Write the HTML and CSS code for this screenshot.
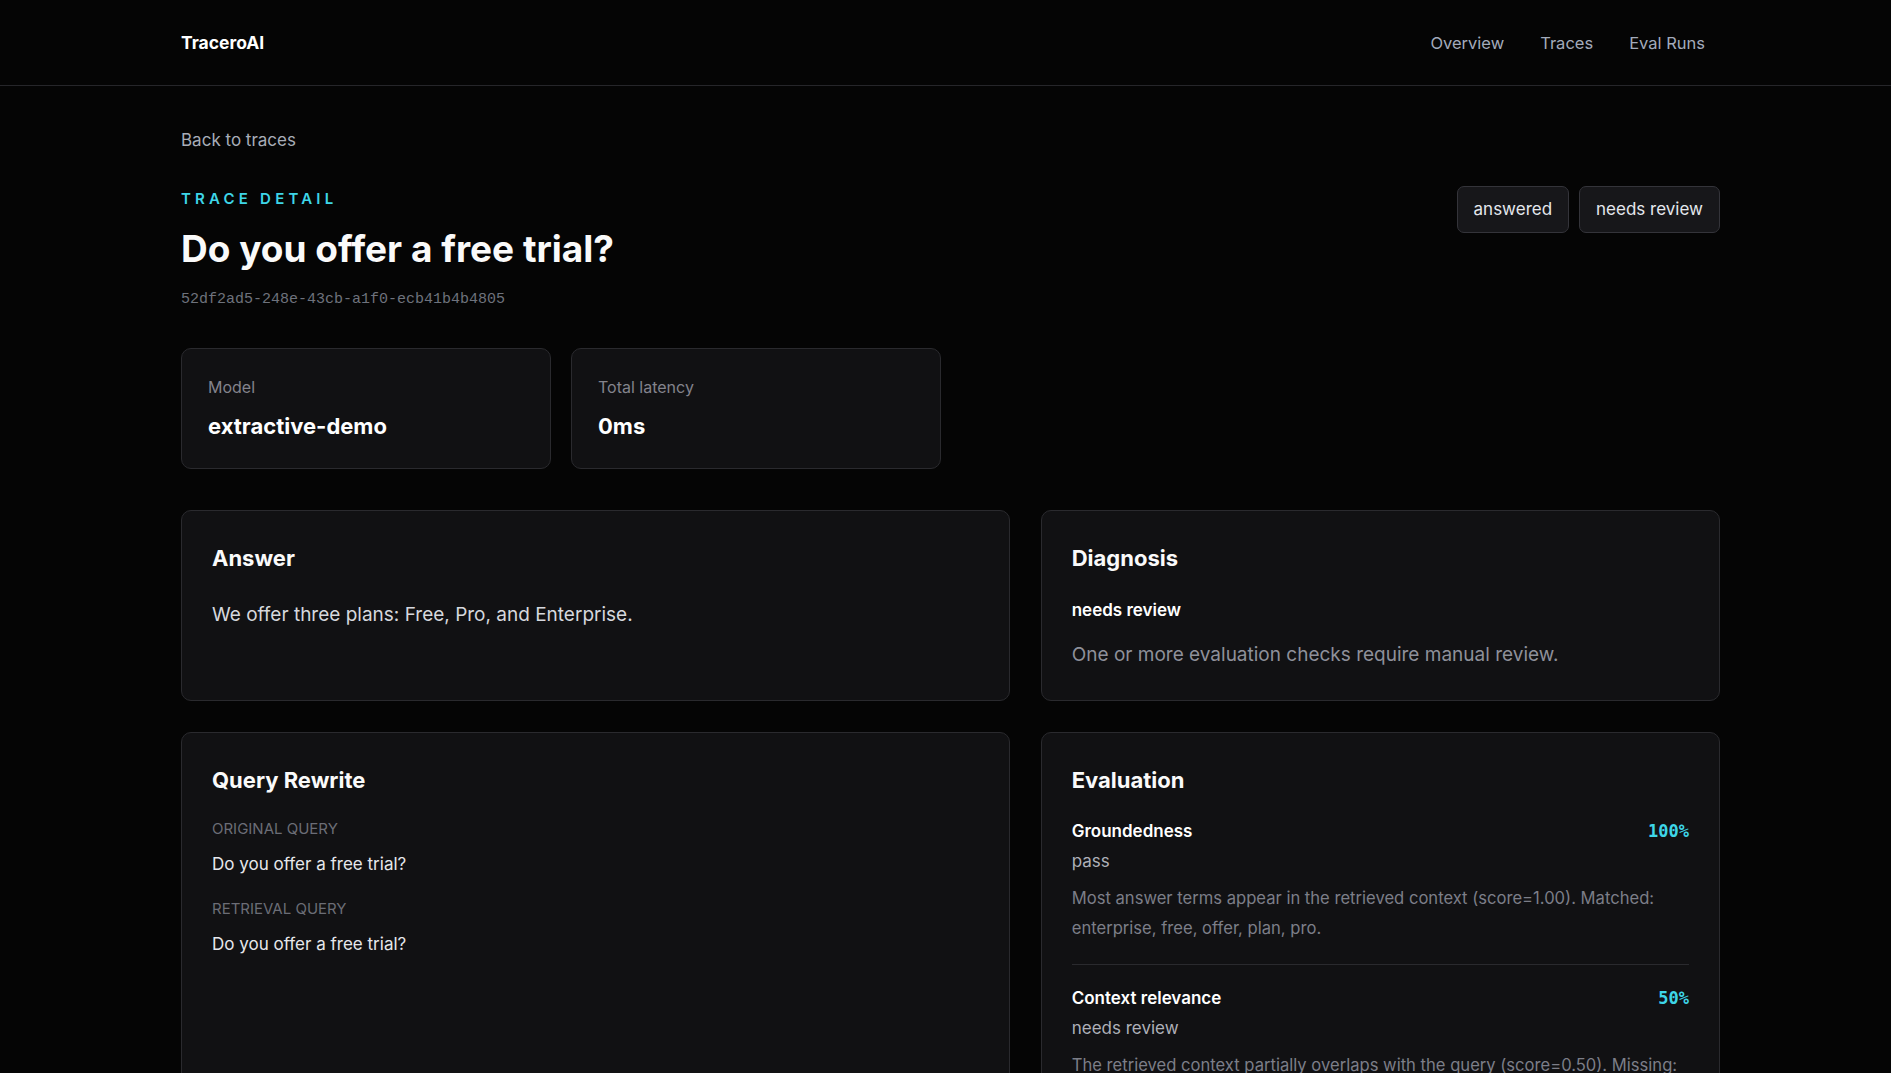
FILE: index.html
```html
<!DOCTYPE html>
<html lang="en">
<head>
  <meta charset="UTF-8">
  <title>TraceroAI · Trace detail</title>
  <link rel="stylesheet" href="styles.css">
</head>
<body>
  <header class="topbar">
    <div class="wrap topbar-inner">
      <a class="logo" href="#">TraceroAI</a>
      <nav class="nav">
        <a href="#">Overview</a>
        <a href="#">Traces</a>
        <a href="#">Eval Runs</a>
      </nav>
    </div>
  </header>

  <main class="wrap page">
    <a class="back" href="#">Back to traces</a>

    <div class="head">
      <div>
        <p class="eyebrow">TRACE DETAIL</p>
        <h1>Do you offer a free trial?</h1>
        <p class="trace-id">52df2ad5-248e-43cb-a1f0-ecb41b4b4805</p>
      </div>
      <div class="badges">
        <span class="badge">answered</span>
        <span class="badge">needs review</span>
      </div>
    </div>

    <div class="stats">
      <div class="stat">
        <div class="stat-label">Model</div>
        <div class="stat-value">extractive-demo</div>
      </div>
      <div class="stat">
        <div class="stat-label">Total latency</div>
        <div class="stat-value">0ms</div>
      </div>
    </div>

    <div class="grid">
      <section class="card">
        <h2>Answer</h2>
        <p class="answer">We offer three plans: Free, Pro, and Enterprise.</p>
      </section>

      <section class="card">
        <h2>Diagnosis</h2>
        <p class="diag-status">needs review</p>
        <p class="diag-text">One or more evaluation checks require manual review.</p>
      </section>

      <section class="card">
        <h2>Query Rewrite</h2>
        <div class="q-label">ORIGINAL QUERY</div>
        <p class="q-text">Do you offer a free trial?</p>
        <div class="q-label">RETRIEVAL QUERY</div>
        <p class="q-text">Do you offer a free trial?</p>
      </section>

      <section class="card">
        <h2>Evaluation</h2>
        <div class="check">
          <div class="check-row">
            <span class="check-name">Groundedness</span>
            <span class="score">100%</span>
          </div>
          <div class="check-status">pass</div>
          <p class="check-text">Most answer terms appear in the retrieved context (score=1.00). Matched: enterprise, free, offer, plan, pro.</p>
        </div>
        <div class="check">
          <div class="check-row">
            <span class="check-name">Context relevance</span>
            <span class="score">50%</span>
          </div>
          <div class="check-status">needs review</div>
          <p class="check-text">The retrieved context partially overlaps with the query (score=0.50). Missing: trial.</p>
        </div>
      </section>
    </div>
  </main>
</body>
</html>
```

FILE: styles.css
```css
body { margin: 0; background: #050505; color: #ececef; font-family: Inter, "Noto Sans", sans-serif; font-size: 17px; }
a { color: inherit; text-decoration: none; }
p { margin: 0; }
.wrap { padding: 0 171px 0 181px; }

.topbar { border-bottom: 1px solid #26262a; }
.topbar-inner { height: 85px; display: flex; align-items: center; justify-content: space-between; }
.logo { font-size: 17.5px; font-weight: 700; color: #fff; }
.nav { display: flex; gap: 36px; padding-right: 15px; }
.nav a { color: #a3abbb; font-size: 16.5px; }

.page { padding-top: 42px; padding-bottom: 40px; }
.back { color: #a8adb8; font-size: 17px; line-height: 1.5; }

.head { display: flex; justify-content: space-between; align-items: flex-start; margin-top: 35px; }
.eyebrow { color: #3ed6e8; font-size: 15px; font-weight: 600; letter-spacing: 4.2px; line-height: 20px; }
h1 { margin: 18px 0 0; font-size: 37px; font-weight: 700; line-height: 44px; color: #fafafa; }
.trace-id { margin-top: 20px; font-family: "Liberation Mono", monospace; font-size: 15px; color: #6e727c; }
.badges { display: flex; gap: 10px; margin-top: -3px; }
.badge { padding: 0 16px; height: 45px; line-height: 45px; border: 1px solid #34343a; border-radius: 7px; background: #17171a; color: #e4e7ed; font-size: 17px; }

.stats { display: flex; gap: 20px; margin-top: 40px; }
.stat { width: 316px; height: 119px; padding: 0 26px; border: 1px solid #2a2a2e; border-radius: 10px; background: #111113; }
.stat-label { margin-top: 28px; color: #83838c; font-size: 16px; }
.stat-value { margin-top: 16px; font-size: 22px; font-weight: 700; color: #fff; }

.grid { display: grid; grid-template-columns: 1.22fr 1fr; gap: 31px; margin-top: 41px; }
.card { min-height: 129px; padding: 30px; border: 1px solid #2a2a2e; border-radius: 10px; background: #111113; }
h2 { margin: 0; font-size: 22px; font-weight: 700; line-height: 34px; color: #fafafa; }
.answer { margin-top: 28px; font-size: 19px; color: #d6d8de; }
.diag-status { margin-top: 25px; font-size: 17px; font-weight: 600; color: #fff; }
.diag-text { margin-top: 23px; font-size: 19px; color: #8e909a; }

.q-label { margin-top: 22px; font-size: 15px; color: #6b6d76; }
.q-label + .q-text { margin-top: 16px; }
.q-text { font-size: 17px; color: #e6e7eb; }
.q-text + .q-label { margin-top: 25px; }

.check { padding: 24px 0 21px; border-bottom: 1px solid #2a2a2e; }
.check + .check { padding-top: 23px; border-bottom: none; }
.check-row { display: flex; justify-content: space-between; align-items: center; }
.check-name { font-size: 17px; font-weight: 600; color: #fff; }
.score { font-family: "DejaVu Sans Mono", monospace; font-size: 17px; font-weight: 600; color: #3ed6e8; }
.check-status { margin-top: 10px; font-size: 17px; color: #aeb0b8; }
.check-text { margin-top: 12px; font-size: 16.6px; line-height: 30px; color: #7c7e88; }
```
